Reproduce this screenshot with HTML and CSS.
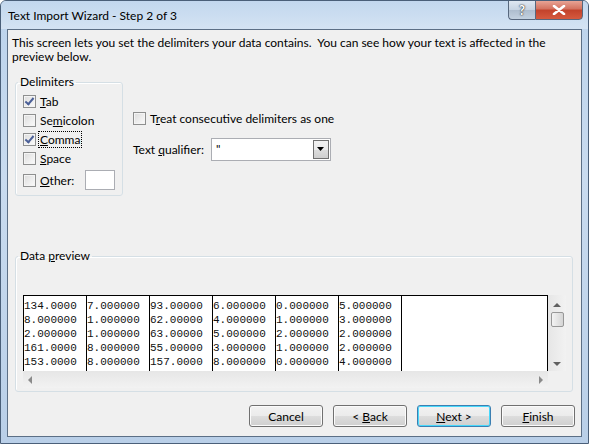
FILE: index.html
```html
<!DOCTYPE html>
<html lang="en">
  <head>
    <meta charset="UTF-8" />
    <title>Text Import Wizard - Step 2 of 3</title>
    <link rel="stylesheet" href="styles.css">
  </head>
  <body>
    <div class="window">
      <div class="titlebar">
        <span class="title">Text Import Wizard - Step 2 of 3</span>
        <div class="caption-btns">
          <div class="cap-btn help">?</div>
          <div class="cap-btn close">
            <svg width="14" height="10" viewBox="0 0 14 10">
              <path d="M2 1 L12 9 M12 1 L2 9" stroke="#fff" stroke-width="2.6" stroke-linecap="round" />
            </svg>
          </div>
        </div>
      </div>

      <div class="client">
        <p class="intro">
          This screen lets you set the delimiters your data contains.&nbsp; You can see how your text is affected in the<br>
          preview below.
        </p>

        <div class="options">
          <fieldset class="group delims">
            <legend>Delimiters</legend>
            <div class="group-body">
              <div class="check-row"><span class="box checked"></span><span><u>T</u>ab</span></div>
              <div class="check-row"><span class="box"></span><span>Se<u>m</u>icolon</span></div>
              <div class="check-row"><span class="box checked"></span><span class="focus"><u>C</u>omma</span></div>
              <div class="check-row"><span class="box"></span><span><u>S</u>pace</span></div>
              <div class="check-row other-row">
                <span class="box"></span><span class="other-label"><u>O</u>ther:</span>
                <span class="textbox"></span>
              </div>
            </div>
          </fieldset>

          <div class="side-opts">
            <div class="check-row treat"><span class="box"></span><span>T<u>r</u>eat consecutive delimiters as one</span></div>
            <div class="qualifier">
              <span class="q-label">Text <u>q</u>ualifier:</span>
              <div class="combo">
                <span class="combo-value">"</span>
                <span class="combo-btn"><svg width="8" height="5" viewBox="0 0 8 5"><path d="M0 0 H7 L3.5 4 Z" fill="#000" /></svg></span>
              </div>
            </div>
          </div>
        </div>

        <fieldset class="group preview">
          <legend>Data <u>p</u>review</legend>
          <div class="grid-wrap">
            <div class="grid-main">
              <div class="grid">
                <div class="col">134.0000<br>8.000000<br>2.000000<br>161.0000<br>153.0000</div>
                <div class="col">7.000000<br>1.000000<br>1.000000<br>8.000000<br>8.000000</div>
                <div class="col">93.00000<br>62.00000<br>63.00000<br>55.00000<br>157.0000</div>
                <div class="col">6.000000<br>4.000000<br>5.000000<br>3.000000<br>8.000000</div>
                <div class="col">0.000000<br>1.000000<br>2.000000<br>1.000000<br>0.000000</div>
                <div class="col">5.000000<br>3.000000<br>2.000000<br>2.000000<br>4.000000</div>
                <div class="col-rest"></div>
              </div>
              <div class="vscroll">
                <span class="arrow up"></span>
                <span class="thumb"></span>
                <span class="arrow down"></span>
              </div>
            </div>
            <div class="hscroll-row">
              <div class="hscroll">
                <span class="arrow left"></span>
                <span class="arrow right"></span>
              </div>
              <div class="corner"></div>
            </div>
          </div>
        </fieldset>

        <div class="buttons">
          <button class="btn">Cancel</button>
          <button class="btn">&lt; <u>B</u>ack</button>
          <button class="btn default"><u>N</u>ext &gt;</button>
          <button class="btn"><u>F</u>inish</button>
        </div>
      </div>
    </div>
  </body>
</html>
```

FILE: styles.css
```css
body {
  margin: 0;
  background: #ffffff;
  font-family: "Segoe UI", Lato, "Noto Sans", sans-serif;
  font-size: 12px;
  color: #000;
}

.window {
  width: 589px;
  height: 444px;
  box-sizing: border-box;
  border: 1px solid #4a5f79;
  border-radius: 6px 6px 0 0;
  background: linear-gradient(to bottom, #bcd3ec 0%, #c9dbef 40%, #b9cfe8 100%);
  display: flex;
  flex-direction: column;
  overflow: hidden;
}

.titlebar {
  height: 28px;
  display: flex;
  align-items: flex-start;
  justify-content: space-between;
  background: linear-gradient(to bottom, #c2d7ee, #d4e3f3);
}

.title {
  margin: 7px 0 0 7px;
  color: #000;
}

.caption-btns {
  display: flex;
  margin-right: 5px;
  margin-top: -1px;
}

.cap-btn {
  height: 20px;
  box-sizing: border-box;
  border: 1px solid #57677d;
  display: flex;
  align-items: center;
  justify-content: center;
}

.help {
  width: 27px;
  border-radius: 0 0 0 4px;
  border-right: none;
  background: linear-gradient(to bottom, #dfe7f1 0%, #c6d3e2 50%, #aebdce 51%, #c3d1e0 100%);
  color: #fff;
  font-weight: bold;
  font-size: 13px;
  text-shadow: 0 0 1px #222, 0 0 2px #333;
}

.close {
  width: 48px;
  border-radius: 0 0 4px 0;
  background: linear-gradient(to bottom, #e8a495 0%, #d3715e 45%, #c2422b 50%, #d55a3f 100%);
}

.client {
  flex: 1;
  margin: 0 6px 6px 6px;
  border: 1px solid #5c6f86;
  background: #f0f0f0;
  display: flex;
  flex-direction: column;
}

.intro {
  margin: 6px 0 0 4px;
  line-height: 14px;
  white-space: nowrap;
}

.options {
  display: flex;
  margin-top: 11px;
  margin-left: 7px;
}

.group {
  margin: 0;
  padding: 0;
  border: 1px solid #d5dfe5;
  border-radius: 3px;
  box-shadow: inset 1px 1px 0 #fff;
}

.group legend {
  margin-left: 2px;
  padding: 0 2px;
  line-height: 14px;
}

.delims {
  width: 108px;
  box-sizing: border-box;
  height: 121px;
}

.group-body {
  padding: 3px 0 0 7px;
}

.check-row {
  display: flex;
  align-items: center;
  height: 19px;
}

.box {
  width: 13px;
  height: 13px;
  box-sizing: border-box;
  border: 1px solid #8e8f8f;
  background: linear-gradient(135deg, #dcdcdc, #fbfbfb);
  box-shadow: inset 0 0 0 1px #f4f4f4;
  margin-right: 4px;
  position: relative;
}

.box.checked::after {
  content: "";
  position: absolute;
  left: 3px;
  top: 0px;
  width: 3px;
  height: 7px;
  border: solid #4a5f97;
  border-width: 0 2px 2px 0;
  transform: rotate(40deg);
}

.focus {
  outline: 1px dotted #000;
  padding: 0 1px;
  margin-left: -1px;
}

.other-row {
  height: 22px;
  margin-top: 1px;
}

.other-label {
  width: 45px;
}

.textbox {
  width: 30px;
  height: 20px;
  box-sizing: border-box;
  background: #fff;
  border: 1px solid #abadb3;
}

.side-opts {
  margin-left: 10px;
  padding-top: 34px;
}

.qualifier {
  display: flex;
  align-items: center;
  margin-top: 10px;
}

.q-label {
  width: 78px;
}

.combo {
  width: 120px;
  height: 23px;
  box-sizing: border-box;
  border: 1px solid #abadb3;
  background: #fff;
  display: flex;
  justify-content: space-between;
}

.combo-value {
  padding: 2px 0 0 4px;
}

.combo-btn {
  width: 16px;
  margin: 1px;
  box-sizing: border-box;
  border: 1px solid #707070;
  background: linear-gradient(to bottom, #f2f2f2, #ebebeb 50%, #dddddd 51%, #cfcfcf);
  display: flex;
  align-items: center;
  justify-content: center;
}

.preview {
  margin: 53px 0 0 7px;
  width: 558px;
  height: 143px;
  box-sizing: border-box;
}

.grid-wrap {
  width: 543px;
  margin: 32px 0 0 7px;
}

.grid-main {
  display: flex;
  height: 76px;
}

.grid {
  flex: 1;
  display: flex;
  background: #fff;
  border: solid #000;
  border-width: 1px 1px 0 1px;
  font-family: "Courier New", "Liberation Mono", monospace;
  font-size: 11px;
  line-height: 14px;
  color: #111;
}

.col {
  width: 62px;
  border-right: 1px solid #000;
  padding-top: 3px;
  white-space: nowrap;
  overflow: hidden;
}

.col-rest {
  flex: 1;
}

.vscroll {
  width: 18px;
  background: linear-gradient(to right, #e6e6e6, #f2f2f2);
  display: flex;
  flex-direction: column;
  align-items: center;
  padding-top: 8px;
  box-sizing: border-box;
}

.thumb {
  width: 13px;
  height: 15px;
  box-sizing: border-box;
  margin-top: 5px;
  border: 1px solid #979797;
  border-radius: 2px;
  background: linear-gradient(to right, #f3f3f3, #e4e4e4 50%, #d5d5d5);
}

.arrow {
  width: 0;
  height: 0;
  border: 4px solid transparent;
}

.arrow.up {
  border-bottom-color: #606060;
  border-top-width: 0;
}

.arrow.down {
  margin-top: 35px;
  border-top-color: #606060;
  border-bottom-width: 0;
}

.hscroll-row {
  display: flex;
  height: 17px;
}

.hscroll {
  flex: 1;
  background: linear-gradient(to bottom, #e6e6e6, #f2f2f2);
  display: flex;
  align-items: center;
  justify-content: space-between;
  padding: 0 5px;
}

.arrow.left {
  border-right-color: #8a8a8a;
  border-left-width: 0;
}

.arrow.right {
  border-left-color: #8a8a8a;
  border-right-width: 0;
}

.corner {
  width: 18px;
  background: #f0f0f0;
}

.buttons {
  display: flex;
  justify-content: flex-end;
  gap: 10px;
  margin: 13px 6px 0 0;
}

.btn {
  width: 74px;
  height: 22px;
  font-family: "Segoe UI", Lato, "Noto Sans", sans-serif;
  font-size: 12px;
  color: #000;
  border: 1px solid #707070;
  border-radius: 3px;
  background: linear-gradient(to bottom, #f2f2f2 0%, #ebebeb 50%, #dddddd 51%, #cfcfcf 100%);
  box-shadow: inset 0 0 0 1px #fbfbfb;
  padding: 0;
}

.btn.default {
  border-color: #3c7fb1;
  box-shadow: inset 0 0 0 1px #48d8fb;
}
```
